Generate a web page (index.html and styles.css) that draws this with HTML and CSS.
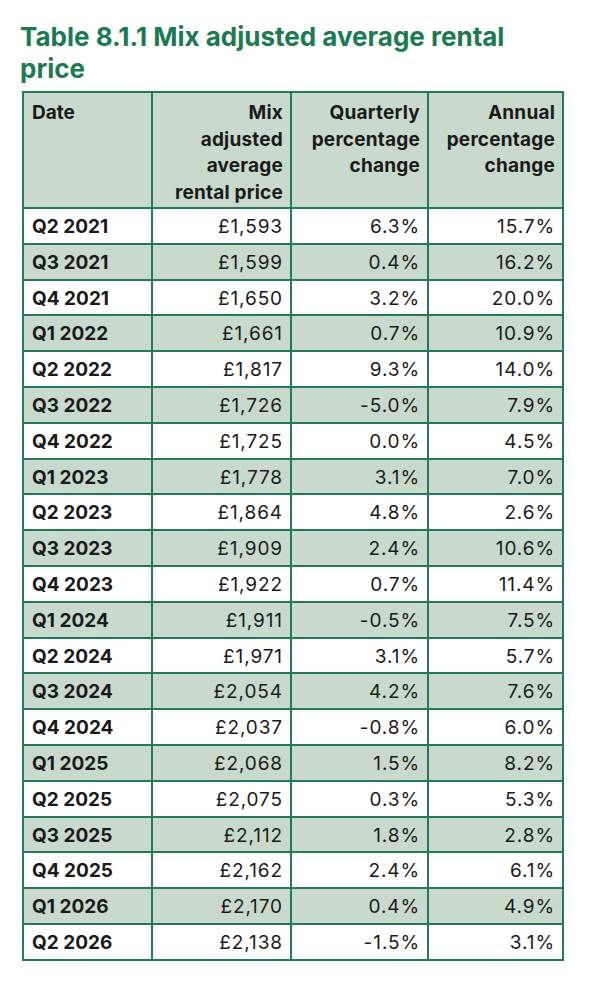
FILE: index.html
```html
<!DOCTYPE html>
<html lang="en">
<head>
<meta charset="utf-8">
<title>Table 8.1.1</title>
<link rel="stylesheet" href="styles.css">
</head>
<body>
<div class="page">
  <h1 class="title">Table 8.1.1 Mix adjusted average rental price</h1>
  <table class="data">
    <colgroup>
      <col class="c1"><col class="c2"><col class="c3"><col class="c4">
    </colgroup>
    <thead>
      <tr>
        <th class="left">Date</th>
        <th>Mix<br>adjusted<br>average<br>rental price</th>
        <th>Quarterly percentage change</th>
        <th>Annual percentage change</th>
      </tr>
    </thead>
    <tbody>
      <tr><td class="left">Q2 2021</td><td>£1,593</td><td>6.3%</td><td>15.7%</td></tr>
      <tr class="alt"><td class="left">Q3 2021</td><td>£1,599</td><td>0.4%</td><td>16.2%</td></tr>
      <tr><td class="left">Q4 2021</td><td>£1,650</td><td>3.2%</td><td>20.0%</td></tr>
      <tr class="alt"><td class="left">Q1 2022</td><td>£1,661</td><td>0.7%</td><td>10.9%</td></tr>
      <tr><td class="left">Q2 2022</td><td>£1,817</td><td>9.3%</td><td>14.0%</td></tr>
      <tr class="alt"><td class="left">Q3 2022</td><td>£1,726</td><td>-5.0%</td><td>7.9%</td></tr>
      <tr><td class="left">Q4 2022</td><td>£1,725</td><td>0.0%</td><td>4.5%</td></tr>
      <tr class="alt"><td class="left">Q1 2023</td><td>£1,778</td><td>3.1%</td><td>7.0%</td></tr>
      <tr><td class="left">Q2 2023</td><td>£1,864</td><td>4.8%</td><td>2.6%</td></tr>
      <tr class="alt"><td class="left">Q3 2023</td><td>£1,909</td><td>2.4%</td><td>10.6%</td></tr>
      <tr><td class="left">Q4 2023</td><td>£1,922</td><td>0.7%</td><td>11.4%</td></tr>
      <tr class="alt"><td class="left">Q1 2024</td><td>£1,911</td><td>-0.5%</td><td>7.5%</td></tr>
      <tr><td class="left">Q2 2024</td><td>£1,971</td><td>3.1%</td><td>5.7%</td></tr>
      <tr class="alt"><td class="left">Q3 2024</td><td>£2,054</td><td>4.2%</td><td>7.6%</td></tr>
      <tr><td class="left">Q4 2024</td><td>£2,037</td><td>-0.8%</td><td>6.0%</td></tr>
      <tr class="alt"><td class="left">Q1 2025</td><td>£2,068</td><td>1.5%</td><td>8.2%</td></tr>
      <tr><td class="left">Q2 2025</td><td>£2,075</td><td>0.3%</td><td>5.3%</td></tr>
      <tr class="alt"><td class="left">Q3 2025</td><td>£2,112</td><td>1.8%</td><td>2.8%</td></tr>
      <tr><td class="left">Q4 2025</td><td>£2,162</td><td>2.4%</td><td>6.1%</td></tr>
      <tr class="alt"><td class="left">Q1 2026</td><td>£2,170</td><td>0.4%</td><td>4.9%</td></tr>
      <tr><td class="left">Q2 2026</td><td>£2,138</td><td>-1.5%</td><td>3.1%</td></tr>
    </tbody>
  </table>
</div>
</body>
</html>
```

FILE: styles.css
```css
html, body {
  margin: 0;
  padding: 0;
  background: #ffffff;
}

.page {
  padding: 21px 0 0 20px;
  font-family: Inter, "Open Sans", "Liberation Sans", sans-serif;
  color: #1a1a1a;
}

.title {
  margin: 0 0 6px 0;
  width: 520px;
  font-size: 26px;
  line-height: 32px;
  font-weight: 700;
  color: #1b7a52;
}

.data {
  margin-left: 2px;
  border-collapse: collapse;
  width: 541px;
  table-layout: fixed;
  font-size: 19px;
}

.c1 { width: 129px; }
.c2 { width: 139px; }
.c3 { width: 137px; }
.c4 { width: 135px; }

.data th,
.data td {
  border: 2px solid #23795a;
  text-align: right;
  padding: 0 7px 0 8px;
}

.data th {
  background: #c9dacd;
  font-weight: 700;
  vertical-align: top;
  line-height: 26.5px;
  padding-top: 7px;
  padding-bottom: 0;
  height: 107px;
  letter-spacing: 0.2px;
}

.data td {
  padding-top: 3px;
  padding-bottom: 0;
  line-height: 30.8px;
  letter-spacing: 0.9px;
}

.data .left {
  text-align: left;
  font-weight: 700;
  letter-spacing: 0;
}

.data tr.alt td {
  background: #c9dacd;
}
```
